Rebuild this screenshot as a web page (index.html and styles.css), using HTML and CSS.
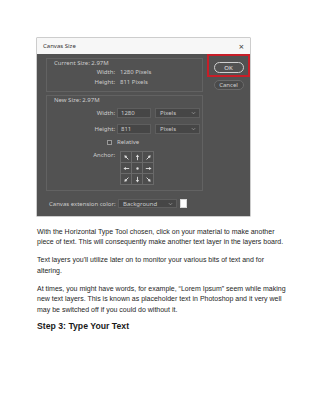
FILE: index.html
```html
<!DOCTYPE html>
<html>
<head>
<meta charset="utf-8">
<link rel="stylesheet" href="styles.css">
</head>
<body>
<div class="page">
  <div class="dialog">
    <div class="titlebar"><span class="ttl">Canvas Size</span><span class="close">×</span></div>
    <div class="dbody">
      <div class="left">
        <div class="group g1">
          <div class="gtitle">Current Size: 2.97M</div>
          <div class="row"><span class="lbl">Width:</span><span class="val">1280 Pixels</span></div>
          <div class="row"><span class="lbl">Height:</span><span class="val">811 Pixels</span></div>
        </div>
        <div class="group g2">
          <div class="gtitle">New Size: 2.97M</div>
          <div class="row frow"><span class="lbl">Width:</span><span class="input">1280</span><span class="select">Pixels<svg class="chev" viewBox="0 0 6 4"><path d="M1 1 L3 3 L5 1" fill="none" stroke="#a8a8a8" stroke-width="0.8"/></svg></span></div>
          <div class="row frow f2"><span class="lbl">Height:</span><span class="input">811</span><span class="select">Pixels<svg class="chev" viewBox="0 0 6 4"><path d="M1 1 L3 3 L5 1" fill="none" stroke="#a8a8a8" stroke-width="0.8"/></svg></span></div>
          <div class="relrow"><span class="check"></span><span>Relative</span></div>
          <div class="anchorrow">
            <span class="lbl">Anchor:</span>
            <div class="grid">
              <div class="cell"><svg viewBox="0 0 10 10"><g transform="rotate(-45 5 5)"><path d="M5 8 V3.5" stroke="#e0e0e0" stroke-width="1"/><path d="M3.2 4.4 L5 1.6 L6.8 4.4 Z" fill="#e0e0e0"/></g></svg></div>
              <div class="cell"><svg viewBox="0 0 10 10"><g><path d="M5 8 V3.5" stroke="#e0e0e0" stroke-width="1"/><path d="M3.2 4.4 L5 1.6 L6.8 4.4 Z" fill="#e0e0e0"/></g></svg></div>
              <div class="cell"><svg viewBox="0 0 10 10"><g transform="rotate(45 5 5)"><path d="M5 8 V3.5" stroke="#e0e0e0" stroke-width="1"/><path d="M3.2 4.4 L5 1.6 L6.8 4.4 Z" fill="#e0e0e0"/></g></svg></div>
              <div class="cell"><svg viewBox="0 0 10 10"><g transform="rotate(-90 5 5)"><path d="M5 8 V3.5" stroke="#e0e0e0" stroke-width="1"/><path d="M3.2 4.4 L5 1.6 L6.8 4.4 Z" fill="#e0e0e0"/></g></svg></div>
              <div class="cell"><svg viewBox="0 0 10 10"><circle cx="5" cy="5" r="1.3" fill="#e0e0e0"/></svg></div>
              <div class="cell"><svg viewBox="0 0 10 10"><g transform="rotate(90 5 5)"><path d="M5 8 V3.5" stroke="#e0e0e0" stroke-width="1"/><path d="M3.2 4.4 L5 1.6 L6.8 4.4 Z" fill="#e0e0e0"/></g></svg></div>
              <div class="cell"><svg viewBox="0 0 10 10"><g transform="rotate(-135 5 5)"><path d="M5 8 V3.5" stroke="#e0e0e0" stroke-width="1"/><path d="M3.2 4.4 L5 1.6 L6.8 4.4 Z" fill="#e0e0e0"/></g></svg></div>
              <div class="cell"><svg viewBox="0 0 10 10"><g transform="rotate(180 5 5)"><path d="M5 8 V3.5" stroke="#e0e0e0" stroke-width="1"/><path d="M3.2 4.4 L5 1.6 L6.8 4.4 Z" fill="#e0e0e0"/></g></svg></div>
              <div class="cell"><svg viewBox="0 0 10 10"><g transform="rotate(135 5 5)"><path d="M5 8 V3.5" stroke="#e0e0e0" stroke-width="1"/><path d="M3.2 4.4 L5 1.6 L6.8 4.4 Z" fill="#e0e0e0"/></g></svg></div>
            </div>
          </div>
        </div>
        <div class="extrow"><span class="extlbl">Canvas extension color:</span><span class="select wide">Background<svg class="chev" viewBox="0 0 6 4"><path d="M1 1 L3 3 L5 1" fill="none" stroke="#a8a8a8" stroke-width="0.8"/></svg></span><span class="swatch"></span></div>
      </div>
      <div class="right">
        <div class="hl"><div class="btn ok">OK</div></div>
        <div class="btn cancel">Cancel</div>
      </div>
    </div>
  </div>
  <div class="text">
    <p>With the Horizontal Type Tool chosen, click on your material to make another<br>piece of text. This will consequently make another text layer in the layers board.</p>
    <p>Text layers you'll utilize later on to monitor your various bits of text and for<br>altering.</p>
    <p>At times, you might have words, for example, “Lorem Ipsum” seem while making<br>new text layers. This is known as placeholder text in Photoshop and it very well<br>may be switched off if you could do without it.</p>
    <h2>Step 3: Type Your Text</h2>
  </div>
</div>
</body>
</html>
```

FILE: styles.css
```css
html, body {
  margin: 0;
  padding: 0;
  background: #ffffff;
}
.page {
  width: 320px;
  height: 414px;
  padding: 38px 0 0 37px;
  box-sizing: border-box;
  overflow: hidden;
}
.dialog {
  width: 213px;
  height: 178px;
  display: flex;
  flex-direction: column;
  font-family: "Noto Sans", "Open Sans", sans-serif;
  font-size: 6px;
  color: #cccccc;
  white-space: nowrap;
  box-shadow: 0 0 0 0.5px #9a9a9a;
}
.titlebar {
  height: 16px;
  background: #f7f7f7;
  display: flex;
  align-items: center;
  justify-content: space-between;
  padding: 0 6px 0 6px;
  color: #333;
  font-size: 6px;
}
.close {
  font-size: 9px;
  color: #444;
  line-height: 1;
}
.dbody {
  flex: 1;
  background: #525252;
  display: flex;
}
.left {
  width: 157px;
  margin-left: 9px;
  padding-top: 4px;
  display: flex;
  flex-direction: column;
}
.group {
  border: 1px solid #626262;
  padding: 1px 0 4px 7px;
}
.g2 {
  margin-top: 3px;
  padding-bottom: 5px;
}
.gtitle {
  line-height: 7px;
  height: 7px;
}
.row {
  display: flex;
  align-items: center;
  height: 10px;
}
.lbl {
  width: 61px;
  text-align: right;
  flex: none;
}
.val {
  margin-left: 5px;
}
.frow {
  margin-top: 4px;
}
.f2 {
  margin-top: 6px;
}
.input {
  margin-left: 2px;
  width: 34px;
  height: 10px;
  box-sizing: border-box;
  background: #464646;
  border: 1px solid #5e5e5e;
  padding-left: 3px;
  display: flex;
  align-items: center;
}
.select {
  margin-left: 4px;
  width: 45px;
  height: 10px;
  box-sizing: border-box;
  background: #464646;
  border: 1px solid #5e5e5e;
  padding: 0 3px 0 4px;
  display: flex;
  align-items: center;
  justify-content: space-between;
}
.chev {
  width: 5px;
  height: 4px;
}
.relrow {
  margin-top: 3px;
  height: 10px;
  display: flex;
  align-items: center;
  padding-left: 53px;
}
.check {
  width: 5px;
  height: 5px;
  border: 1px solid #9a9a9a;
  box-sizing: border-box;
  margin-right: 5px;
  background: #4a4a4a;
}
.anchorrow {
  margin-top: 4px;
  display: flex;
  align-items: flex-start;
}
.anchorrow .lbl {
  line-height: 8px;
}
.grid {
  margin-left: 5px;
  display: grid;
  grid-template-columns: repeat(3, 10px);
  grid-template-rows: repeat(3, 10px);
  gap: 1px;
  padding: 1px;
  background: #6a6a6a;
}
.cell {
  background: #4d4d4d;
  display: flex;
  align-items: center;
  justify-content: center;
}
.cell svg {
  width: 9px;
  height: 9px;
}
.extrow {
  margin-top: 8px;
  height: 9px;
  display: flex;
  align-items: center;
  padding-left: 3px;
}
.extlbl {
  width: 69px;
  flex: none;
}
.select.wide {
  margin-left: 0;
  width: 59px;
  height: 9px;
}
.swatch {
  margin-left: 3px;
  width: 7px;
  height: 9px;
  background: #ffffff;
  box-sizing: border-box;
  border: 1px solid #d8d8d8;
}
.right {
  margin-left: 4px;
  width: 43px;
  display: flex;
  flex-direction: column;
  align-items: center;
}
.hl {
  width: 43px;
  height: 23px;
  box-sizing: border-box;
  border: 2px solid #c81e28;
  padding-top: 6px;
  display: flex;
  justify-content: center;
  align-items: flex-start;
}
.btn {
  width: 30px;
  height: 11px;
  box-sizing: border-box;
  border-radius: 6px;
  display: flex;
  align-items: center;
  justify-content: center;
  font-size: 6px;
}
.ok {
  border: 1px solid #d0d0d0;
  color: #e6e6e6;
}
.cancel {
  margin-top: 3px;
  height: 10px;
  border: 1px solid #6a6a6a;
  background: #4a4a4a;
  color: #cfcfcf;
}
.text {
  margin-top: 10.5px;
  font-family: "Liberation Sans", Arial, sans-serif;
  font-size: 7px;
  line-height: 10.5px;
  color: #262626;
  white-space: nowrap;
}
.text p {
  margin: 0;
}
.text p + p {
  margin-top: 7.5px;
}
.text h2 {
  margin: 5.75px 0 0 0;
  font-size: 8.7px;
  line-height: 11px;
  font-weight: bold;
  color: #1a1a1a;
}
```
